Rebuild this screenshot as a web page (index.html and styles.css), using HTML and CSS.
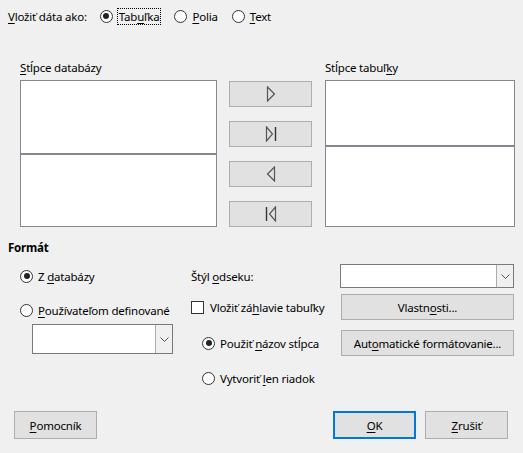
FILE: index.html
```html
<!DOCTYPE html>
<html lang="sk">
<head>
<meta charset="utf-8">
<title>Vložiť databázové stĺpce</title>
<link rel="stylesheet" href="styles.css">
</head>
<body>
<div class="dialog">
  <div class="insert-row">
    <span class="insert-label"><u>V</u>ložiť dáta ako:</span>
    <label class="radio first"><span class="dot checked"></span><span class="focus">Tab<u>u</u>ľka</span></label>
    <label class="radio second"><span class="dot"></span><span><u>P</u>olia</span></label>
    <label class="radio third"><span class="dot"></span><span><u>T</u>ext</span></label>
  </div>

  <div class="columns">
    <div class="col-left">
      <div class="col-label"><u>S</u>tĺpce databázy</div>
      <div class="listbox left-box">
        <div class="list-top"></div>
        <div class="list-bottom"></div>
      </div>
    </div>
    <div class="col-mid">
      <button class="btn arrow-btn" type="button">
        <svg width="10" height="16" viewBox="0 0 10 16"><path d="M1.5 1 L8.5 8 L1.5 15 Z" fill="none" stroke="#555" stroke-width="1.2" stroke-linejoin="miter"/></svg>
      </button>
      <button class="btn arrow-btn" type="button">
        <svg width="12" height="16" viewBox="0 0 12 16"><path d="M1.5 1 L7.5 8 L1.5 15 Z" fill="none" stroke="#555" stroke-width="1.2"/><path d="M10.5 1 V15" stroke="#333" stroke-width="1.4"/></svg>
      </button>
      <button class="btn arrow-btn" type="button">
        <svg width="10" height="16" viewBox="0 0 10 16"><path d="M8.5 1 L1.5 8 L8.5 15 Z" fill="none" stroke="#555" stroke-width="1.2"/></svg>
      </button>
      <button class="btn arrow-btn" type="button">
        <svg width="12" height="16" viewBox="0 0 12 16"><path d="M1.5 1 V15" stroke="#333" stroke-width="1.4"/><path d="M10.5 1 L4.5 8 L10.5 15 Z" fill="none" stroke="#555" stroke-width="1.2"/></svg>
      </button>
    </div>
    <div class="col-right">
      <div class="col-label">Stĺpce tabuľ<u>k</u>y</div>
      <div class="listbox right-box">
        <div class="list-top"></div>
        <div class="list-bottom"></div>
      </div>
    </div>
  </div>

  <div class="format-title">Formát</div>
  <div class="format">
    <div class="format-left">
      <label class="radio row-a"><span class="dot checked"></span><span>Z <u>d</u>atabázy</span></label>
      <label class="radio row-b"><span class="dot"></span><span><u>P</u>oužívateľom definované</span></label>
      <div class="combo combo-tall">
        <div class="combo-field"></div>
        <div class="combo-drop"><svg width="9" height="5" viewBox="0 0 9 5"><path d="M0.5 0.5 L4.5 4.5 L8.5 0.5" fill="none" stroke="#555" stroke-width="1"/></svg></div>
      </div>
    </div>
    <div class="format-right">
      <div class="f-row r1">
        <span class="f-label">Štýl <u>o</u>dseku:</span>
        <div class="combo combo-short">
          <div class="combo-field"></div>
          <div class="combo-drop"><svg width="9" height="5" viewBox="0 0 9 5"><path d="M0.5 0.5 L4.5 4.5 L8.5 0.5" fill="none" stroke="#555" stroke-width="1"/></svg></div>
        </div>
      </div>
      <div class="f-row r2">
        <label class="check"><span class="box"></span><span>Vložiť zá<u>h</u>lavie tabuľky</span></label>
        <button class="btn wide" type="button">Vlastn<u>o</u>sti...</button>
      </div>
      <div class="f-row r3">
        <label class="radio indent"><span class="dot checked"></span><span>Použiť <u>n</u>ázov stĺpca</span></label>
        <button class="btn wide" type="button">Aut<u>o</u>matické formátovanie...</button>
      </div>
      <div class="f-row r4">
        <label class="radio indent"><span class="dot"></span><span>Vytvoriť <u>l</u>en riadok</span></label>
      </div>
    </div>
  </div>

  <div class="footer">
    <button class="btn foot" type="button"><u>P</u>omocník</button>
    <div class="foot-right">
      <button class="btn foot default" type="button"><u>O</u>K</button>
      <button class="btn foot" type="button"><u>Z</u>rušiť</button>
    </div>
  </div>
</div>
</body>
</html>
```

FILE: styles.css
```css
html, body {
  margin: 0;
  padding: 0;
}
body {
  width: 523px;
  height: 453px;
  background: #f0f0f0;
  font-family: "Noto Sans", "Open Sans", sans-serif;
  font-size: 11.5px;
  letter-spacing: -0.2px;
  color: #000;
  overflow: hidden;
}
u {
  text-decoration: underline;
  text-underline-offset: 2px;
}
.dialog {
  display: flex;
  flex-direction: column;
  height: 453px;
  box-sizing: border-box;
  padding-bottom: 14px;
}

/* radios */
.radio, .check {
  display: flex;
  align-items: center;
  white-space: nowrap;
}
.dot {
  width: 11px;
  height: 11px;
  border: 1px solid #333;
  border-radius: 50%;
  background: #fff;
  margin-right: 5px;
  position: relative;
  flex: none;
}
.dot.checked::after {
  content: "";
  position: absolute;
  left: 2.5px;
  top: 2.5px;
  width: 6px;
  height: 6px;
  border-radius: 50%;
  background: #222;
}
.box {
  width: 11px;
  height: 11px;
  border: 1px solid #333;
  background: #fff;
  margin-right: 6px;
  flex: none;
}

/* top row */
.insert-row {
  display: flex;
  align-items: center;
  height: 18px;
  margin-top: 7px;
  padding-left: 8px;
}
.insert-label { margin-right: 13px; }
.focus {
  outline: 1px dotted #000;
  outline-offset: 0;
  padding: 0 1px;
}
.radio.second { margin-left: 14px; }
.radio.third { margin-left: 14px; }

/* columns */
.columns {
  display: flex;
  margin-top: 35px;
  padding-left: 20px;
}
.col-label {
  height: 20px;
  line-height: 16px;
}
.listbox {
  background: #fff;
  border: 1px solid #828790;
  height: 145px;
  display: flex;
  flex-direction: column;
}
.left-box { width: 195px; }
.right-box { width: 188px; }
.list-top { border-bottom: 2px solid #828790; }
.left-box .list-top { height: 72px; }
.right-box .list-top { height: 64px; }
.list-bottom { flex: 1; }

.col-mid {
  display: flex;
  flex-direction: column;
  gap: 14px;
  margin: 21px 13px 0 12px;
}
.btn {
  font: inherit;
  letter-spacing: inherit;
  color: #000;
  background: #e1e1e1;
  border: 1px solid #adadad;
  padding: 0;
  display: flex;
  align-items: center;
  justify-content: center;
}
.arrow-btn {
  width: 83px;
  height: 26px;
}

/* format */
.format-title {
  font-weight: bold;
  padding-left: 8px;
  margin-top: 13px;
  height: 16px;
  line-height: 16px;
}
.format {
  display: flex;
  margin-top: 8px;
}
.format-left {
  width: 183px;
  display: flex;
  flex-direction: column;
  padding-left: 20px;
  box-sizing: border-box;
}
.row-a { height: 20px; margin-top: 2px; }
.row-b { height: 20px; margin-top: 14px; }
.combo {
  display: flex;
  background: #fff;
  border: 1px solid #7a7a7a;
}
.combo-tall {
  width: 139px;
  height: 28px;
  margin-left: 12px;
  margin-top: 4px;
}
.combo-short {
  width: 172px;
  height: 22px;
}
.combo-field { flex: 1; }
.combo-drop {
  width: 16px;
  border-left: 1px solid #adadad;
  background: #f0f0f0;
  display: flex;
  align-items: center;
  justify-content: center;
}
.format-right {
  display: flex;
  flex-direction: column;
  padding-left: 8px;
  width: 323px;
}
.f-row {
  display: flex;
  align-items: center;
  justify-content: space-between;
}
.r1 { height: 24px; }
.r2 { height: 26px; margin-top: 6px; }
.r3 { height: 26px; margin-top: 10px; }
.r4 { height: 24px; margin-top: 10px; }
.indent { margin-left: 11px; }
.wide {
  width: 173px;
  height: 26px;
}

/* footer */
.footer {
  display: flex;
  justify-content: space-between;
  margin-top: auto;
  padding: 0 15px 0 14px;
}
.foot-right {
  display: flex;
  gap: 9px;
}
.foot {
  width: 83px;
  height: 28px;
}
.default {
  border: 2px solid #0078d7;
}
```
